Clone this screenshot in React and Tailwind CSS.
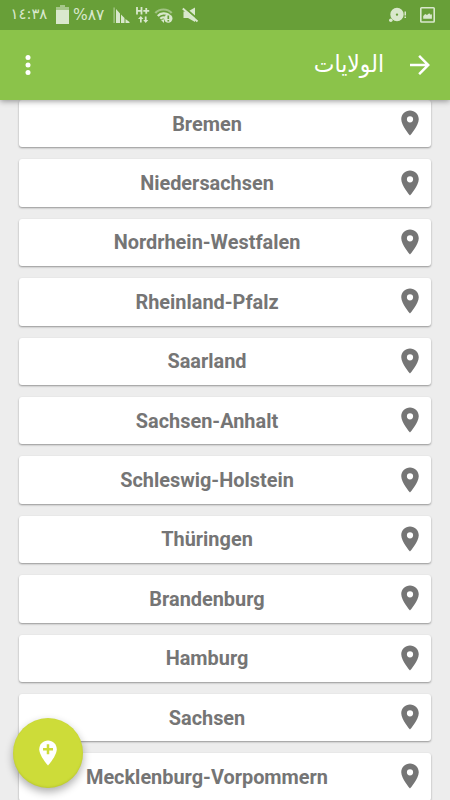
import React from "react";

const states = [
  "Bremen",
  "Niedersachsen",
  "Nordrhein-Westfalen",
  "Rheinland-Pfalz",
  "Saarland",
  "Sachsen-Anhalt",
  "Schleswig-Holstein",
  "Thüringen",
  "Brandenburg",
  "Hamburg",
  "Sachsen",
  "Mecklenburg-Vorpommern",
];

function Pin() {
  return (
    <svg viewBox="0 0 24 24" className="mr-[6.5px] mb-px size-[30px] shrink-0 fill-[#757575]">
      <path d="M12 2C8.13 2 5 5.13 5 9c0 5.25 7 13 7 13s7-7.75 7-13c0-3.87-3.13-7-7-7zm0 9.5a2.5 2.5 0 0 1 0-5 2.5 2.5 0 0 1 0 5z" />
    </svg>
  );
}

function StatusBar() {
  return (
    <div dir="ltr" className="flex h-[30px] shrink-0 items-center bg-[#689f38] text-[#d9e8cd]">
      <bdo dir="ltr" className="mb-[2px] ml-[10.5px] w-[45.5px] whitespace-nowrap font-['DejaVu_Sans',sans-serif] text-[14.8px] leading-none">١٤:٣٨</bdo>
      <svg className="h-[30px] w-[13px] shrink-0" viewBox="0 0 13 30" fill="currentColor">
        <path d="M4 5h5v2h4v3H0V7h4z" opacity=".55" />
        <path d="M0 10h13v14H0z" />
      </svg>
      <bdo dir="ltr" className="mt-[2px] ml-[4px] w-[36px] whitespace-nowrap font-['DejaVu_Sans',sans-serif] text-[15.5px] leading-none">%٨٧</bdo>
      <svg className="h-[30px] w-[92px] shrink-0" viewBox="109 0 92 30" fill="currentColor">
        <path d="M113.500 7.500h1.200V23h-1.200z" opacity=".6" />
        <path d="M116 9l4 4.500V23h-4zM121 14.500l3.500 3.500v5H121zM125.500 19l4 3v1h-4z" />
        <path d="M137 7v7.500M141.500 7v7.500M137 10.800h4.500M143.300 10.800h5.900M146.250 8v5.700" fill="none" stroke="currentColor" strokeWidth="1.800" />
        <path d="M140 22.500V19h-2l2.800-3 2.700 3h-1.800v3.500zM144.800 16.500v3.500h-1.600l2.500 3 2.600-3h-1.700v-3.500z" />
        <g fill="none" stroke="currentColor" strokeWidth="2.200">
          <path d="M155.300 13C159.500 8.300 167.500 8.300 171.700 13" opacity=".5" />
          <path d="M157.800 16c3-3.300 8-3.300 11.200-1" />
          <path d="M160.300 18.800c1.500-1.600 3-1.800 4.500-1" />
        </g>
        <path d="M161 20l3-.7V23z" />
        <circle cx="168.300" cy="18.500" r="4.200" />
        <path d="M168.300 15.600v3.400M168.300 20v1.400" stroke="#689f38" strokeWidth="1.700" />
        <path d="M183.500 11.500h4.500l7-4V22l-7-4h-4.500z" />
        <path d="M184 7.300l15 13" stroke="#689f38" strokeWidth="2" />
        <path d="M182.800 8.500l14.700 13" stroke="currentColor" strokeWidth="2" />
      </svg>
      <svg className="ml-auto mr-[12px] h-[30px] w-[50px] shrink-0" viewBox="388 0 50 30" fill="currentColor">
        <path fillRule="evenodd" d="M397 7.800a6.700 6.700 0 1 0 0 13.400A6.700 6.700 0 0 0 397 7.800zm0 5.600a1.200 1.200 0 1 1 0 2.400 1.200 1.200 0 0 1 0-2.400z" />
        <circle cx="390.800" cy="20.300" r="1.800" />
        <path d="M404.500 11.500h1.500v4h-1.500zM404.500 16.500h1.500V18h-1.500z" />
        <rect x="420.800" y="7.800" width="13.400" height="14.200" rx=".8" fill="none" stroke="currentColor" strokeWidth="1.600" />
        <path d="M423.200 18.700V16l2-2 1.800 1 2.200-1.700 1.500 1.500 1.200-.5v4.400z" />
      </svg>
    </div>
  );
}

export default function App() {
  return (
    <div dir="rtl" className="relative flex h-[800px] w-[450px] flex-col overflow-hidden bg-[#ededed] font-[Roboto,sans-serif]">
      <div className="relative z-10 shrink-0 shadow-[0_1px_6px_rgba(0,0,0,0.42)]">
        <StatusBar />
        <header className="flex h-[70px] items-center bg-[#8bc34a] text-white">
          <svg className="mr-[15px] size-[30px]" viewBox="0 0 24 24" fill="currentColor">
            <path d="M12 4l-1.410 1.410L16.170 11H4v2h12.170l-5.580 5.590L12 20l8-8z" />
          </svg>
          <h1 className="mr-[21px] scale-y-105 whitespace-nowrap font-['DejaVu_Sans',sans-serif] text-[22px] leading-none">الولايات</h1>
          <svg className="mr-auto ml-[12.5px] size-[30px]" viewBox="0 0 24 24" fill="currentColor">
            <circle cx="12" cy="6" r="2" />
            <circle cx="12" cy="12" r="2" />
            <circle cx="12" cy="18" r="2" />
          </svg>
        </header>
      </div>
      <ul className="flex flex-col gap-[12px] px-[19px]">
        {states.map((name) => (
          <li key={name} className="flex h-[47.4px] shrink-0 items-center rounded-[3px] bg-white shadow-[0_1px_2px_rgba(0,0,0,0.38)]">
            <Pin />
            <span dir="ltr" className="mt-[2px] w-[375px] text-center text-[19.9px] font-bold leading-[20px] text-[#757575]">{name}</span>
          </li>
        ))}
      </ul>
      <button aria-label="Add place" className="absolute bottom-[12.500px] left-[12.500px] z-20 flex size-[70px] items-center justify-center rounded-full bg-[#cddc39] shadow-[0_4px_8px_rgba(0,0,0,0.32),inset_0_-1px_2px_rgba(120,130,0,0.2)]">
        <svg className="size-[30px]" viewBox="0 0 24 24">
          <path fill="#fff" d="M12 2C8.130 2 5 5.130 5 9c0 5.250 7 13 7 13s7-7.750 7-13c0-3.870-3.130-7-7-7z" />
          <path fill="#cddc39" d="M11 5h2v3h3v2h-3v3h-2v-3H8V8h3z" />
        </svg>
      </button>
    </div>
  );
}
